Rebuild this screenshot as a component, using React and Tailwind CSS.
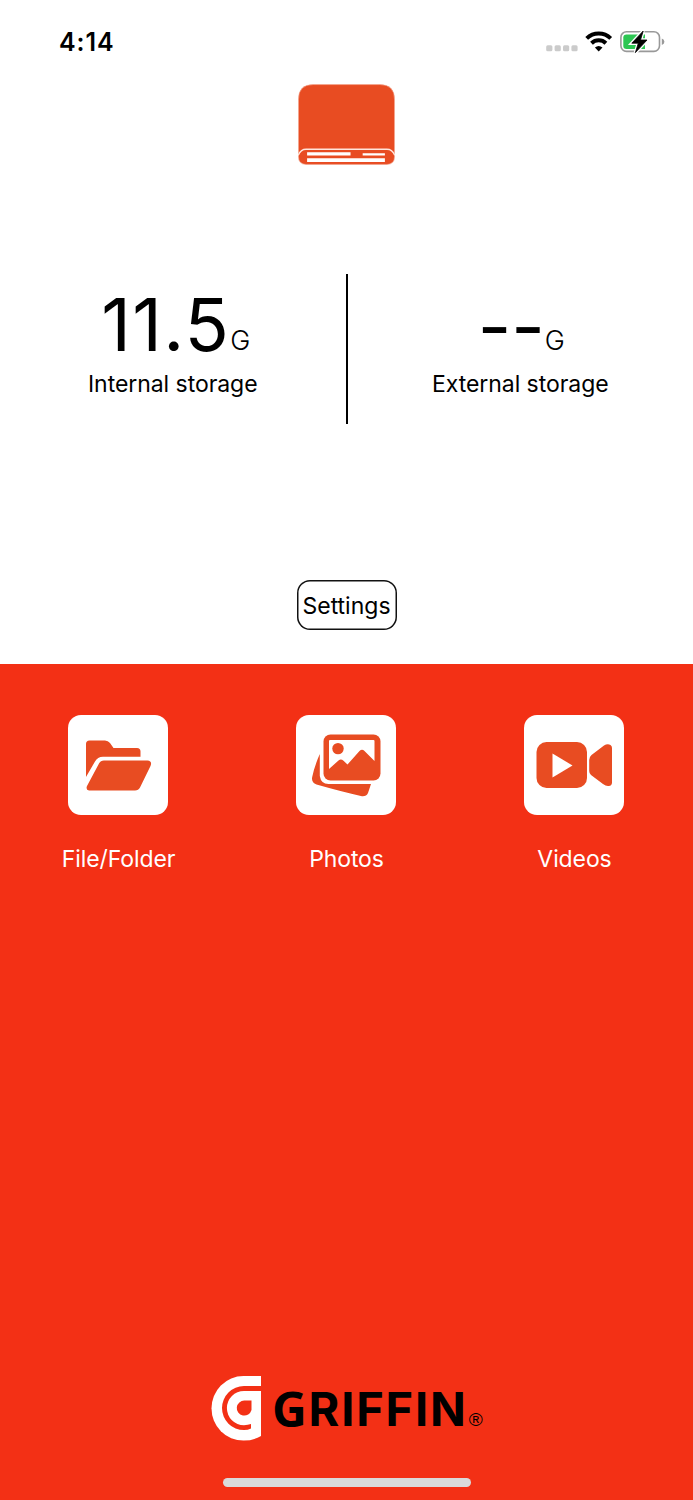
function StatusBar() {
  return (
    <header className="flex h-[84px] items-start justify-between pl-[59px] pr-[27px]">
      <time className="mt-6 text-[25px] leading-9 font-semibold tracking-[0.9px]">4:14</time>
      <svg className="mt-6 h-9 w-[122px]" viewBox="544 24 122 36" aria-label="Signal, Wi-Fi, battery charging">
        <g fill="#cbcbcb">
          <rect x="546.2" y="45.3" width="6.2" height="6" rx="1.5" />
          <rect x="554.6" y="45.3" width="6.2" height="6" rx="1.5" />
          <rect x="563" y="45.3" width="6.2" height="6" rx="1.5" />
          <rect x="571.4" y="45.3" width="6.2" height="6" rx="1.5" />
        </g>
        <g fill="none" stroke="#000" strokeWidth="4">
          <path d="M586.7 38.4A17.3 17.3 0 0 1 610.7 38.4" />
          <path d="M591.5 43.2A10.4 10.4 0 0 1 605.9 43.2" />
        </g>
        <path d="M598.7 51.4L594.9 47.6Q598.7 44.3 602.5 47.6Z" />
        <rect x="620.9" y="31.8" width="38.6" height="19.6" rx="5.6" fill="none" stroke="#999" strokeWidth="1.6" />
        <path d="M661.8 38.6Q664.4 39.4 664.4 41.7T661.8 45Z" fill="#999" />
        <path d="M626.5 34.4H645V49H626.5Q623.3 49 623.3 45.8V37.6Q623.3 34.4 626.5 34.4Z" fill="#2dc653" />
        <path d="M643.2 31L631.8 43.2H638.3L635.4 52.6L647 40H640.5Z" stroke="#fff" strokeWidth="3.4" />
        <path d="M643.2 31L631.8 43.2H638.3L635.4 52.6L647 40H640.5Z" stroke="#000" strokeWidth=".8" />
      </svg>
    </header>
  );
}

function DriveIcon() {
  return (
    <svg className="h-[81px] w-[97px]" viewBox="0 0 96 80" aria-hidden="true">
      <path d="M15 .5H81Q95.500 .5 95.500 15V72Q95.500 79.500 88 79.500H8Q.5 79.500 .5 72V15Q.5 .5 15 .5Z" fill="#e84c22" stroke="#f4a48d" strokeWidth=".6" />
      <path d="M.3 70.500Q2.500 64.500 8 64.500H88Q93.500 64.500 95.700 70.500" fill="none" stroke="#ffe5dc" strokeWidth="1.3" />
      <path d="M9 67.500H52V70.700H9ZM64 68.400H86V70.600H64ZM9 73.500H86V77H9Z" fill="#fff" />
    </svg>
  );
}

function Storage({ value, label, valueClass, digitsClass }) {
  return (
    <div className="flex flex-1 flex-col items-center pt-[13px]">
      <div className={"flex h-[75px] items-start " + valueClass}>
        <span className={"text-[73px] leading-[75px] " + digitsClass}>{value}</span>
        <span className="mt-10 text-[27px] leading-7 font-[350]">G</span>
      </div>
      <div className="mt-[7px] text-[23px] leading-[30px] tracking-[-0.05px]">{label}</div>
    </div>
  );
}

function FolderIcon() {
  return (
    <svg className="size-[100px]" viewBox="0 0 100 100" fill="#e84c22" aria-hidden="true">
      <path d="M18 62V29Q18 25.500 21.500 25.500H37Q40 25.500 42 28L45.500 33H69Q72.500 33 72.500 36.500V41.800H35Q29.500 41.800 27 46.500Z" />
      <path d="M36 45.500H79.500Q84.500 46 82.500 51L72 72.500Q70.500 75.500 67 75.500H21Q17.500 75 19 71L31 48.500Q32.500 45.500 36 45.500Z" />
    </svg>
  );
}

function PhotosIcon() {
  return (
    <svg className="size-[100px]" viewBox="0 0 100 100" fill="#e84c22" aria-hidden="true">
      <path d="M23.800 39V61Q25 69 32.500 69H75L72 78Q70.500 81.500 66 81.200Q45 76.500 20.500 69.500Q15 67.500 16.200 62Q18.500 51 23.800 39Z" />
      <rect x="27.500" y="19.500" width="57" height="46" rx="7" />
      <path d="M33 26Q33 25 34 25H77.500Q78.500 25 78.500 26V46L68.500 36Q66 33.500 63.500 36L51.500 49.500L47.500 45.800Q45 43.500 42.500 45.500L33 54Z" fill="#fff" />
      <circle cx="42" cy="33.600" r="5.700" />
    </svg>
  );
}

function VideosIcon() {
  return (
    <svg className="size-[100px]" viewBox="0 0 100 100" fill="#e84c22" aria-hidden="true">
      <rect x="12.500" y="27" width="50.500" height="46" rx="10" />
      <path d="M28.500 38.500L48.500 50.500L28.500 62.500Z" fill="#fff" />
      <path d="M65.200 45Q65.200 42 67.500 40L80 30.500Q83.500 28.500 86.500 30Q88 31 88 33V68Q87.500 71.500 84 71Q81.500 71 79 69L67 60Q65.200 58.500 65.200 56Z" />
    </svg>
  );
}

function Shortcut({ icon, label }) {
  return (
    <button className="flex flex-col items-center">
      <span className="flex size-[100px] overflow-hidden rounded-[13px] bg-white">{icon}</span>
      <span className="mt-[29px] pl-px text-[23px] leading-[30px] tracking-[-0.1px] text-white">{label}</span>
    </button>
  );
}

function Brand() {
  return (
    <div className="flex h-[65px] items-start pl-[211px]">
      <svg className="h-[65px] w-[50px] shrink-0" viewBox="0 .4 50 65" aria-hidden="true">
        <path d="M50 .4H32.500A32 32.300 0 0 0 32.500 65Q42 65 50 60.500Z" fill="#fff" />
        <path d="M50 10.500H33A22 22 0 0 0 33 54.500Q37 54.500 40 53V48.500Q37 49.600 33 49.600A17.100 17.100 0 0 1 33 15.400H50Z" fill="#f33015" />
        <path d="M40.500 25H33.500A7.500 7.500 0 1 0 40.500 34.500Z" fill="#f33015" />
      </svg>
      <span className="ml-[11px] flex text-[47px] leading-[66px] font-bold tracking-[1.8px]">
        <span className="font-['Open_Sans',sans-serif] text-[48px] leading-[65px]">G</span>RIFFIN
      </span>
      <span className="mt-[34px] ml-px font-['Liberation_Sans',sans-serif] text-[19px] leading-5">®</span>
    </div>
  );
}

export default function App() {
  return (
    <div className="flex h-[1500px] w-[693px] flex-col bg-white font-['Inter',sans-serif] text-black">
      <section className="flex h-[664px] flex-col">
        <StatusBar />
        <div className="flex justify-center">
          <DriveIcon />
        </div>
        <div className="mt-[109px] flex h-[150px]">
          <Storage value="11.5" label="Internal storage" valueClass="pl-1.5" digitsClass="tracking-[1.3px]" />
          <div className="w-[2px] bg-black" />
          <Storage value="--" label="External storage" valueClass="pl-0.5" digitsClass="pt-0.5" />
        </div>
        <button className="mt-[156px] h-[50px] w-[100px] self-center rounded-[13px] pt-0.5 text-[23px] whitespace-nowrap shadow-[inset_0_0_0_1.5px_#111]">
          <span className="-mx-2">Settings</span>
        </button>
      </section>
      <main className="flex flex-1 flex-col bg-[#f33015] pt-[51px]">
        <nav className="grid grid-cols-3 pr-[5px] pl-1">
          <Shortcut icon={<FolderIcon />} label="File/Folder" />
          <Shortcut icon={<PhotosIcon />} label="Photos" />
          <Shortcut icon={<VideosIcon />} label="Videos" />
        </nav>
        <footer className="mt-auto pb-[13px]">
          <Brand />
          <div className="mx-auto mt-[37px] h-[9px] w-[248px] rounded-full bg-[#dadada]" />
        </footer>
      </main>
    </div>
  );
}
